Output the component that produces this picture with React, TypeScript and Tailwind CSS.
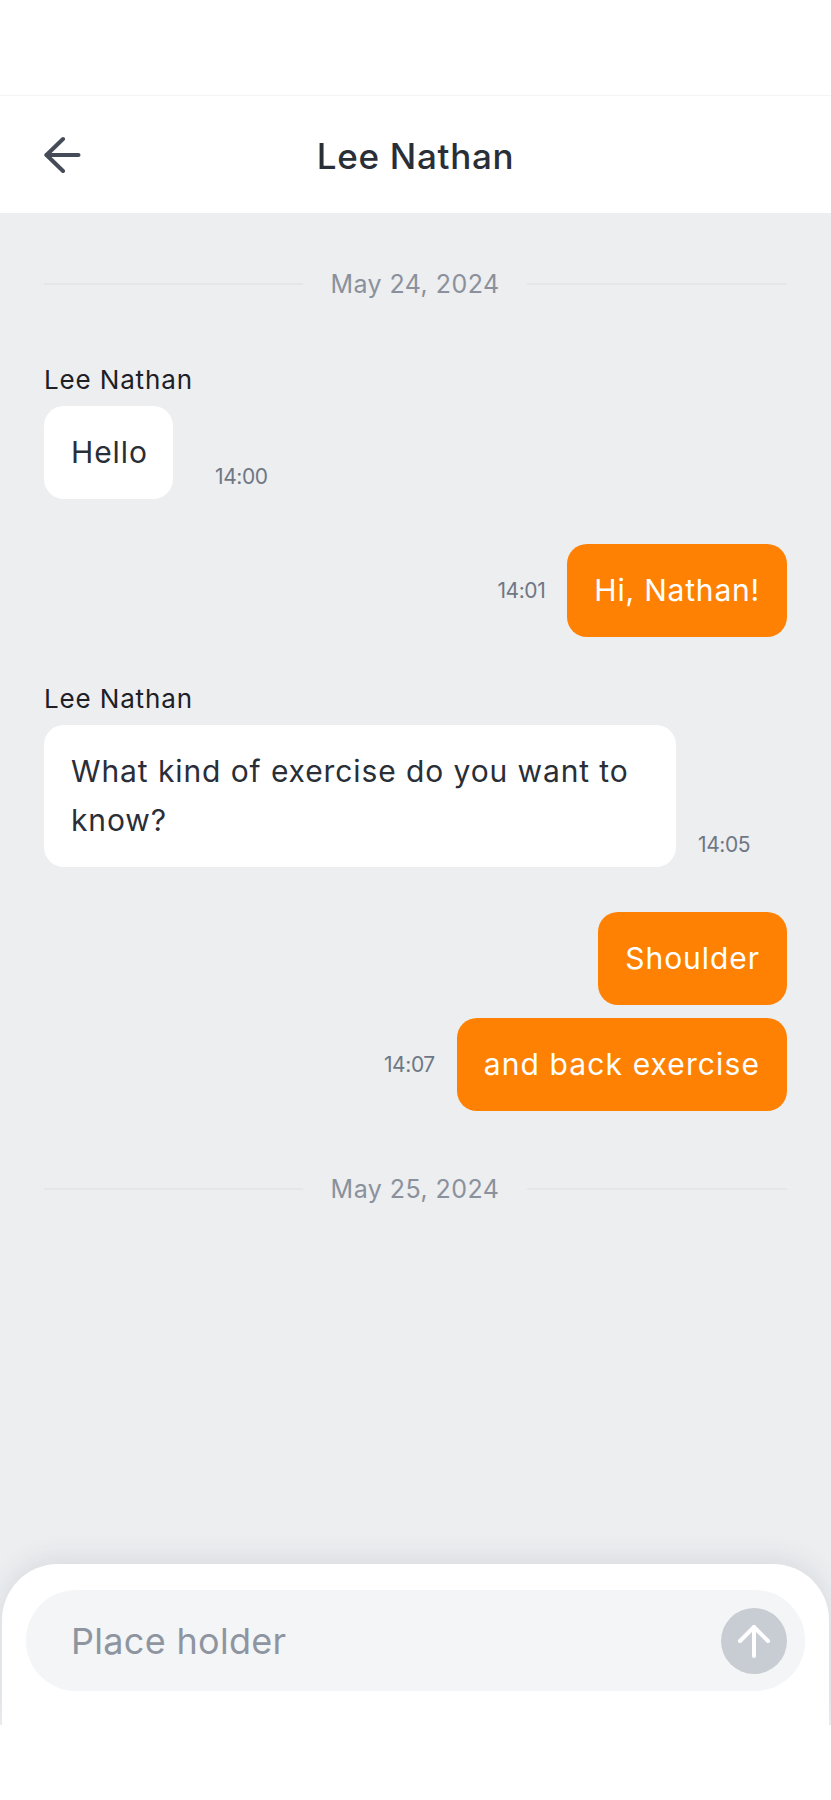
import type { ReactNode } from "react";

function DateDivider({ label, className }: { label: string; className: string }) {
  return (
    <div className={`flex items-center ${className}`}>
      <div className="h-[2px] w-[259px] bg-[#e4e6e9]" />
      <div className="flex-1 text-center text-[25px] leading-[36px] tracking-[0.45px] text-[#8b919c]">{label}</div>
      <div className="h-[2px] w-[260px] bg-[#e4e6e9]" />
    </div>
  );
}

function Time({ children }: { children: string }) {
  return <span className="text-[21px] leading-[30px] tracking-[-0.4px] text-[#6f7785]">{children}</span>;
}

function Incoming({ text, time, width, gap, mt }: { text: ReactNode; time: string; width: string; gap: string; mt: string }) {
  return (
    <div className={mt}>
      <div className="text-[26px] leading-[36px] tracking-[0.85px] text-[#1d2026]">Lee Nathan</div>
      <div className="mt-[8px] flex items-end">
        <div className={`${width} rounded-[20px] bg-white px-[27px] py-[22px] text-[30px] leading-[49px] tracking-[0.9px] text-[#2a2e37]`}>{text}</div>
        <div className={`${gap} pb-[7px] leading-none`}><Time>{time}</Time></div>
      </div>
    </div>
  );
}

function Outgoing({ text, time, mt, tracking }: { text: string; time?: string; mt: string; tracking: string }) {
  return (
    <div className={`flex items-center justify-end ${mt}`}>
      {time && <div className="mr-[22px] leading-none"><Time>{time}</Time></div>}
      <div className={`rounded-[20px] bg-[#ff8103] px-[27px] py-[22px] text-[30px] leading-[49px] ${tracking} text-white`}>{text}</div>
    </div>
  );
}

export default function App() {
  return (
    <div className="flex h-[1800px] w-[831px] flex-col overflow-hidden bg-white font-['Inter','Liberation_Sans',sans-serif]">
      <div className="h-[96px] border-b border-[#f3f4f5] bg-white" />
      <header className="relative flex h-[117px] shrink-0 items-center justify-center bg-white">
        <svg className="absolute left-[44px] top-[40px]" width="37" height="38" viewBox="0 0 37 38" fill="none" stroke="#454b57" strokeWidth="4" strokeLinecap="round" strokeLinejoin="round">
          <path d="M2.5 19H34.5" />
          <path d="M19 3L2.5 19L19 35" />
        </svg>
        <h1 className="mt-[2px] text-[35px] font-medium leading-[48px] tracking-[0.7px] text-[#2a2e37]">Lee Nathan</h1>
      </header>
      <div className="flex h-[1512px] shrink-0 flex-col justify-between bg-[#eceef0]">
        <main className="px-[44px]">
          <DateDivider label="May 24, 2024" className="mt-[53px]" />
          <Incoming mt="mt-[60px]" text="Hello" time="14:00" width="w-[129px]" gap="ml-[42px]" />
          <Outgoing mt="mt-[45px]" text="Hi, Nathan!" time="14:01" tracking="tracking-[0.8px]" />
          <Incoming mt="mt-[44px]" text={<>What kind of exercise do you want to<br />know?</>} time="14:05" width="w-[632px]" gap="ml-[22px]" />
          <Outgoing mt="mt-[45px]" text="Shoulder" tracking="tracking-[0.95px]" />
          <Outgoing mt="mt-[13px]" text="and back exercise" time="14:07" tracking="tracking-[1.1px]" />
          <DateDivider label="May 25, 2024" className="mt-[60px]" />
        </main>
        <div className="mx-[2px] h-[161px] rounded-t-[56px] bg-white px-[24px] pt-[26px] shadow-[0_-6px_26px_rgba(60,70,85,0.10)]">
          <div className="flex h-[101px] items-center justify-between rounded-[50px] bg-[#f4f5f7] pl-[45px] pr-[18px]">
            <span className="text-[36px] leading-[50px] tracking-[0.3px] text-[#8e95a1]">Place holder</span>
            <button className="flex h-[66px] w-[66px] items-center justify-center rounded-full bg-[#c8ccd3]">
              <svg width="36" height="38" viewBox="0 0 36 38" fill="none" stroke="#ffffff" strokeWidth="4" strokeLinecap="round" strokeLinejoin="round">
                <path d="M18 5V34" />
                <path d="M4 19L18 5L32 19" />
              </svg>
            </button>
          </div>
        </div>
      </div>
      <div className="flex-1 bg-white" />
    </div>
  );
}
